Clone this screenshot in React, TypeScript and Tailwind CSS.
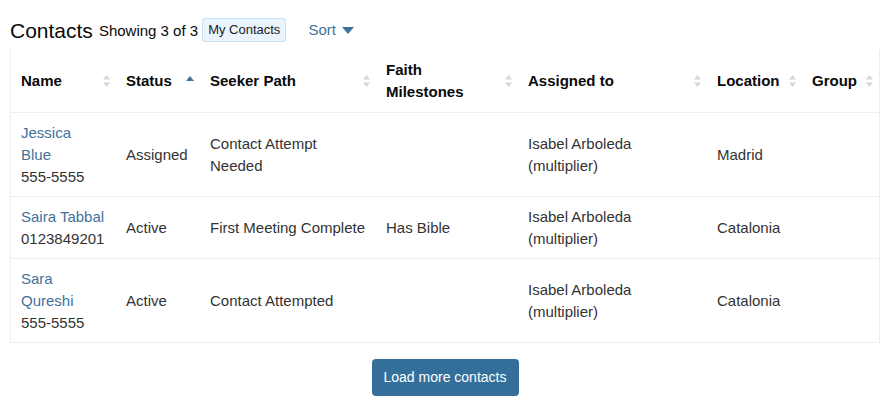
import React from "react";

const SortBoth = () => (
  <svg width="7" height="14" viewBox="0 0 7 14" className="shrink-0">
    <path d="M3.5 1 L7 5.5 L0 5.5 Z" fill="#d6d6d6" />
    <path d="M3.5 13 L7 8.5 L0 8.5 Z" fill="#d6d6d6" />
  </svg>
);

const SortUp = () => (
  <svg width="8" height="14" viewBox="0 0 8 14" className="shrink-0">
    <path d="M4 2 L8 7 L0 7 Z" fill="#3f729b" />
  </svg>
);

type Row = {
  name: string[];
  phone: string;
  status: string;
  seeker: string;
  faith: string;
  assigned: string[];
  location: string;
};

const rows: Row[] = [
  {
    name: ["Jessica", "Blue"],
    phone: "555-5555",
    status: "Assigned",
    seeker: "Contact Attempt Needed",
    faith: "",
    assigned: ["Isabel Arboleda", "(multiplier)"],
    location: "Madrid",
  },
  {
    name: ["Saira Tabbal"],
    phone: "0123849201",
    status: "Active",
    seeker: "First Meeting Complete",
    faith: "Has Bible",
    assigned: ["Isabel Arboleda", "(multiplier)"],
    location: "Catalonia",
  },
  {
    name: ["Sara", "Qureshi"],
    phone: "555-5555",
    status: "Active",
    seeker: "Contact Attempted",
    faith: "",
    assigned: ["Isabel Arboleda", "(multiplier)"],
    location: "Catalonia",
  },
];

const headers: { label: React.ReactNode; w: string; up?: boolean }[] = [
  { label: "Name", w: "w-[105px]" },
  { label: "Status", w: "w-[84px]", up: true },
  { label: "Seeker Path", w: "w-[176px]" },
  { label: <>Faith<br />Milestones</>, w: "w-[142px]" },
  { label: "Assigned to", w: "w-[189px]" },
  { label: "Location", w: "w-[95px]" },
  { label: "Group", w: "w-[77px]" },
];

export default function App() {
  return (
    <div className="w-[895px] h-[415px] bg-white text-[#0a0a0a] font-['Liberation_Sans',Arial,sans-serif]">
      <div className="flex items-center h-[50px] pl-[10px] pt-[10px]">
        <span className="text-[21px] leading-none">Contacts</span>
        <span className="ml-[6px] text-[15px] leading-none">Showing 3 of 3</span>
        <span className="ml-[4px] h-[24px] px-[5px] flex items-center bg-[#eaf4fd] border border-[#c7e1f6] rounded-[2px] text-[13px] text-[#222]">
          My Contacts
        </span>
        <span className="ml-[22px] flex items-center text-[15px] text-[#3f729b]">
          Sort
          <svg width="12" height="7" viewBox="0 0 12 7" className="ml-[6px]">
            <path d="M0 0 L12 0 L6 7 Z" fill="#3f729b" />
          </svg>
        </span>
      </div>
      <div className="ml-[10px] w-[870px] border-x border-b border-[#eeeeee]">
        <table className="table-fixed border-collapse w-[868px] text-[15px] leading-[22px]">
          <thead>
            <tr className="border-b border-[#eeeeee]">
              {headers.map((h, i) => (
                <th key={i} className={`${h.w} h-[62px] p-0 text-left font-bold`}>
                  <div className="flex items-center justify-between pl-[10px] pr-[6px]">
                    <span>{h.label}</span>
                    {h.up ? <SortUp /> : <SortBoth />}
                  </div>
                </th>
              ))}
            </tr>
          </thead>
          <tbody>
            {rows.map((r, i) => (
              <tr key={i} className={i < rows.length - 1 ? "border-b border-[#eeeeee]" : ""}>
                <td className="align-middle pt-[9px] pb-[8px] pl-[10px] pr-[6px]">
                  {r.name.map((n, j) => (
                    <div key={j} className="text-[#3f729b]">{n}</div>
                  ))}
                  <div className="text-[#333]">{r.phone}</div>
                </td>
                <td className="align-middle pt-[9px] pb-[8px] pl-[10px] text-[#333]">{r.status}</td>
                <td className="align-middle pt-[9px] pb-[8px] pl-[10px] pr-[6px] text-[#333]">{r.seeker}</td>
                <td className="align-middle pt-[9px] pb-[8px] pl-[10px] text-[#333]">{r.faith}</td>
                <td className="align-middle pt-[9px] pb-[8px] pl-[10px] text-[#333]">
                  {r.assigned.map((a, j) => (
                    <div key={j}>{a}</div>
                  ))}
                </td>
                <td className="align-middle pt-[9px] pb-[8px] pl-[10px] text-[#333]">{r.location}</td>
                <td className="align-middle pt-[9px] pb-[8px] pl-[10px]"></td>
              </tr>
            ))}
          </tbody>
        </table>
      </div>
      <div className="w-[890px] flex justify-center pt-[16px]">
        <button className="w-[147px] h-[37px] bg-[#336f9a] rounded-[4px] text-white text-[14px]">
          Load more contacts
        </button>
      </div>
    </div>
  );
}
